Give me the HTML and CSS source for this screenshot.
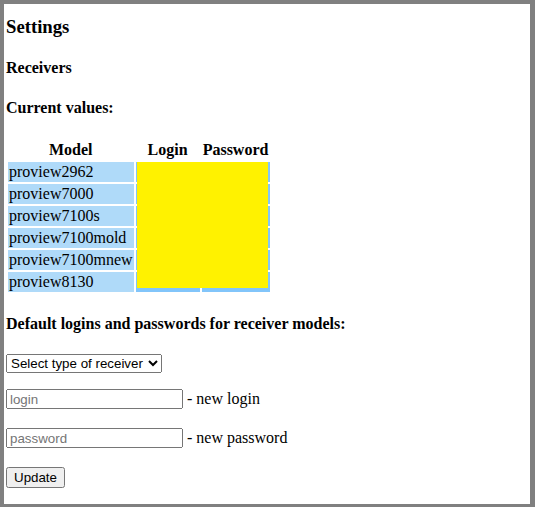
FILE: index.html
```html
<!DOCTYPE html>
<html>
<head>
<meta charset="utf-8">
<title>Settings</title>
<link rel="stylesheet" href="styles.css">
</head>
<body>
<div class="page">
  <h3 class="title">Settings</h3>
  <h4>Receivers</h4>
  <h4>Current values:</h4>
  <div class="table-wrap">
    <table class="values">
      <tr><th>Model</th><th class="col-login">Login</th><th class="col-pass">Password</th></tr>
      <tr><td class="model">proview2962</td><td class="cred"></td><td class="cred"></td></tr>
      <tr><td class="model">proview7000</td><td class="cred"></td><td class="cred"></td></tr>
      <tr><td class="model">proview7100s</td><td class="cred"></td><td class="cred"></td></tr>
      <tr><td class="model">proview7100mold</td><td class="cred"></td><td class="cred"></td></tr>
      <tr><td class="model">proview7100mnew</td><td class="cred"></td><td class="cred"></td></tr>
      <tr><td class="model">proview8130</td><td class="cred"></td><td class="cred"></td></tr>
    </table>
    <div class="overlay"></div>
  </div>
  <h4>Default logins and passwords for receiver models:</h4>
  <p class="sel-row"><select class="ctl sel"><option>Select type of receiver</option></select></p>
  <p class="field"><input class="ctl inp" type="text" placeholder="login"> - new login</p>
  <p class="field"><input class="ctl inp" type="text" placeholder="password"> - new password</p>
  <p class="btn-row"><button class="ctl" type="button">Update</button></p>
</div>
</body>
</html>
```
FILE: styles.css
```css
html {
  background: #808080;
}
body {
  margin: 0;
  font-family: "Liberation Serif", "Times New Roman", serif;
  font-size: 16px;
  color: #000;
}
.page {
  display: flow-root;
  background: #fff;
  margin: 4px 5px 4px 4px;
  padding: 0 2px;
  min-height: calc(100vh - 8px);
  box-sizing: border-box;
}
.title {
  font-size: 18.72px;
  margin: 12px 0 18.72px;
}
h4 {
  font-size: 16px;
  margin: 21.28px 0;
}
.table-wrap {
  position: relative;
  width: max-content;
}
.values {
  border-spacing: 2px;
}
.values th,
.values td {
  padding: 1px;
}
.col-login {
  width: 62px;
}
.col-pass {
  width: 66px;
}
.model {
  background: #afdaf9;
}
.cred {
  background: #82c5fa;
}
.overlay {
  position: absolute;
  left: 131px;
  top: 24px;
  width: 131px;
  height: 126px;
  background: #fff200;
}
p {
  margin: 16px 0;
}
.ctl {
  font-family: "Liberation Sans", Arial, sans-serif;
  font-size: 13.33px;
}
.sel {
  width: 156px;
  height: 19px;
}
.inp {
  box-sizing: border-box;
  width: 177px;
  height: 20px;
}
.field {
  height: 23px;
}
.sel-row {
  margin-top: 18px;
}
```
